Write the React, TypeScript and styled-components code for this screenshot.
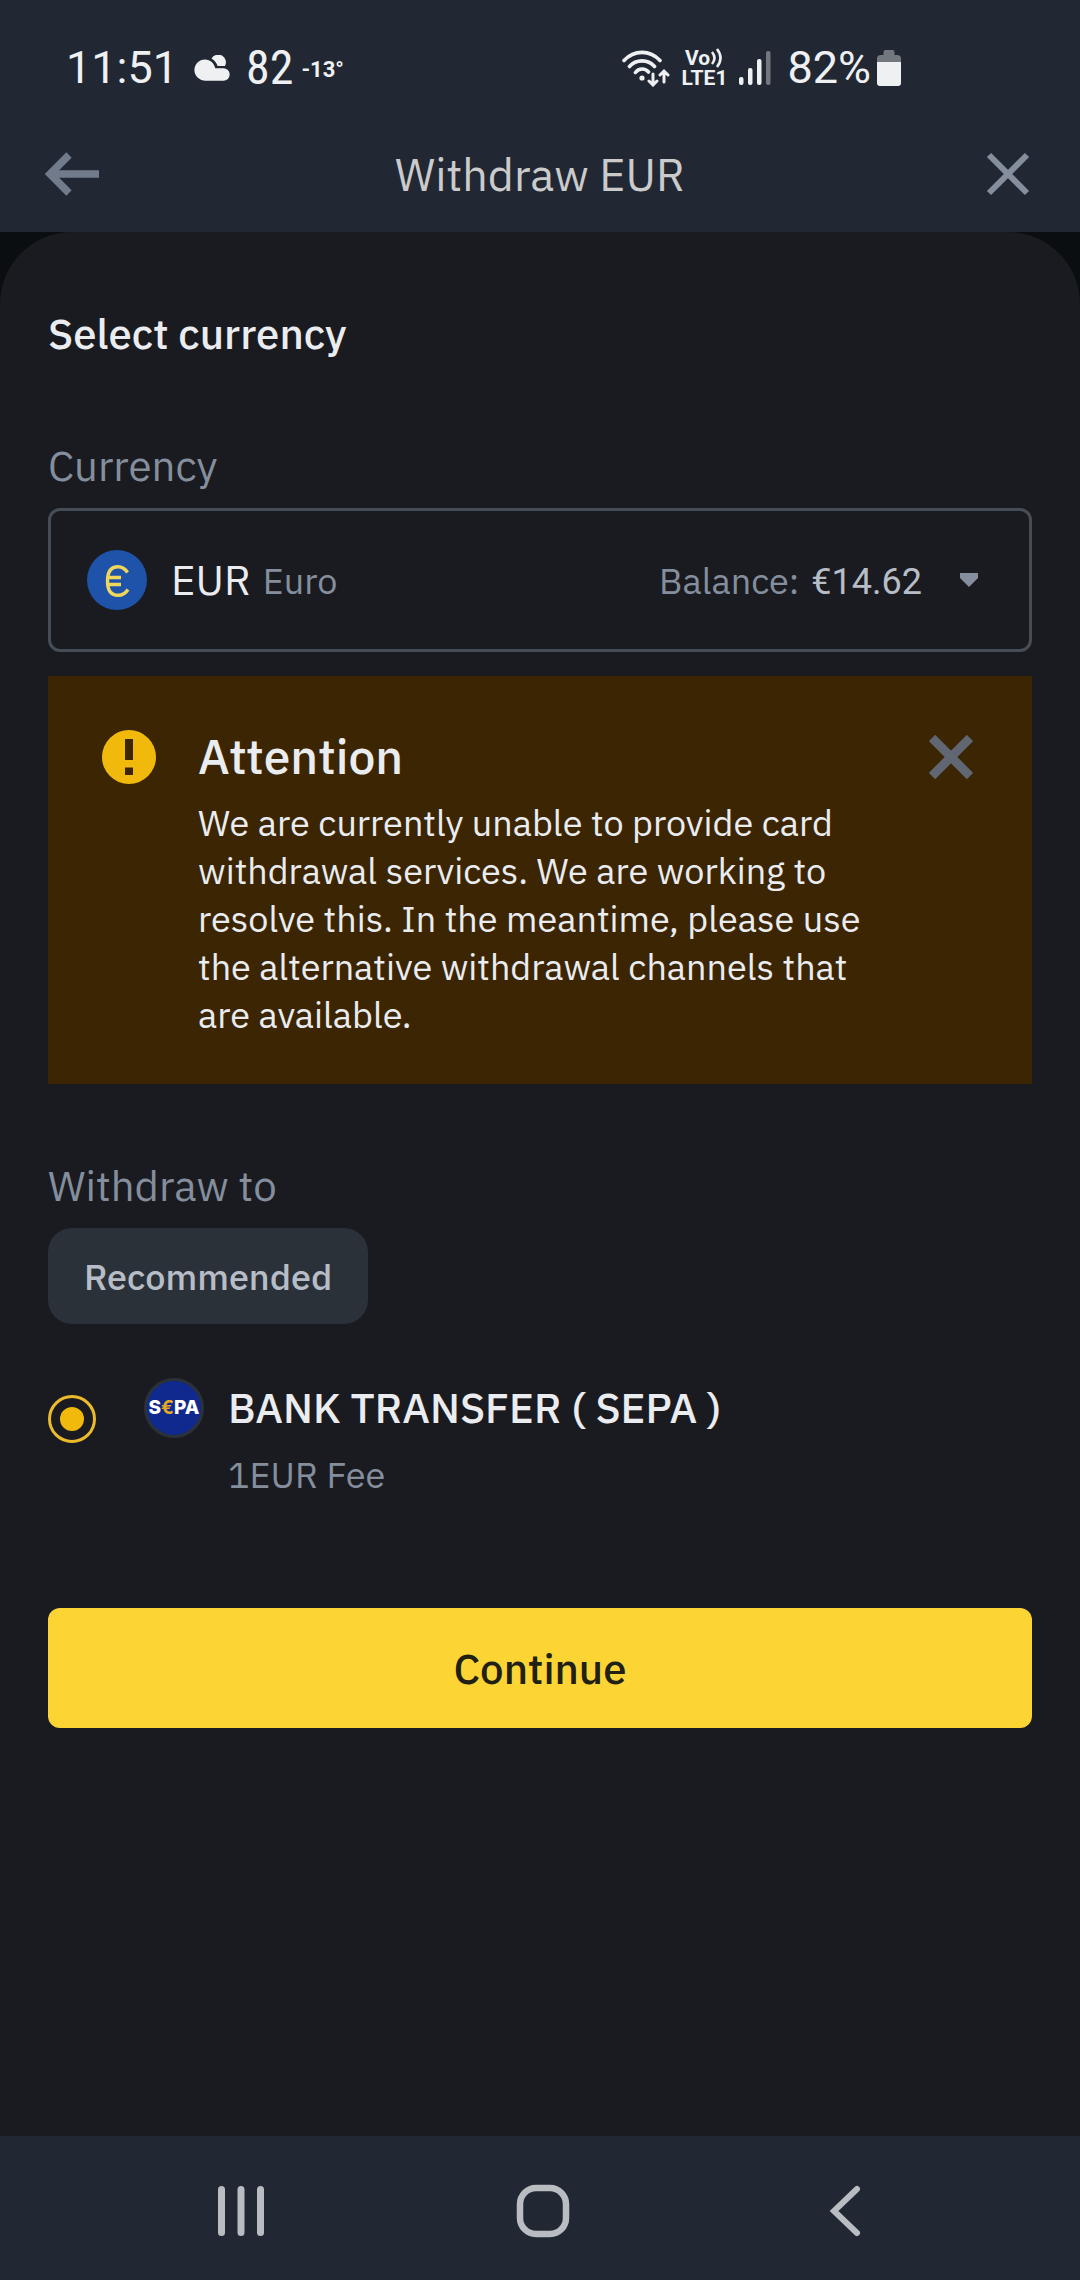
import React, { useState } from "react";
import styled, { createGlobalStyle } from "styled-components";

const color = {
  chrome: "#212833",
  backdrop: "#0b0e11",
  sheet: "#1a1b20",
  line: "#474d57",
  primary: "#eaecef",
  secondary: "#b7bdc6",
  tertiary: "#848e9c",
  status: "#eff0f2",
  nav: "#b9bcc1",
  yellow: "#fcd535",
  gold: "#f0b90b",
  chip: "#2b3139",
  warning: "#3b2503",
};

const GlobalStyle = createGlobalStyle`
  *, *::before, *::after { box-sizing: border-box; }
  body {
    margin: 0;
    background: ${color.backdrop};
    font-family: "IBM Plex Sans", Roboto, "Noto Sans", sans-serif;
  }
  h1, h2, h3, p { margin: 0; }
  button, select { font: inherit; }
`;

const Screen = styled.div`
  display: flex;
  flex-direction: column;
  min-height: 100vh;
  background: ${color.backdrop};
`;

const StatusBar = styled.div`
  display: flex;
  justify-content: space-between;
  align-items: center;
  height: 112px;
  padding: 24px 179px 0 66px;
  background: ${color.chrome};
  color: ${color.status};
  font-family: Roboto, sans-serif;
`;

const StatusGroup = styled.div<{ $gap: number }>`
  display: flex;
  align-items: center;
  gap: ${(p) => p.$gap}px;
`;

const StatusText = styled.span`
  font-size: 45px;
  line-height: 48px;
`;

const WeatherText = styled.span`
  display: flex;
  align-items: center;
  gap: 8px;
  font-family: "Roboto Condensed", Roboto, sans-serif;
  font-size: 48px;
  line-height: 48px;
  small {
    padding-top: 3px;
    font-family: Roboto, sans-serif;
    font-size: 22px;
    font-weight: 700;
  }
`;

const Carrier = styled.span`
  display: flex;
  flex-direction: column;
  font-size: 21px;
  font-weight: 700;
  line-height: 20px;
  span {
    display: flex;
    align-items: center;
    justify-content: center;
  }
`;

const Header = styled.header`
  display: grid;
  grid-template-columns: 60px 1fr 60px;
  align-items: center;
  height: 120px;
  padding: 4px 42px 0;
  background: ${color.chrome};
`;

const Title = styled.h1`
  color: #cbcbcb;
  font-size: 45px;
  font-weight: 400;
  line-height: 60px;
  text-align: center;
`;

const IconButton = styled.button`
  display: flex;
  align-items: center;
  justify-content: center;
  width: 60px;
  height: 60px;
  padding: 0;
  border: 0;
  background: none;
  color: ${color.tertiary};
  cursor: pointer;
`;

const Sheet = styled.main`
  flex: 1;
  padding: 72px 48px;
  border-radius: 72px 72px 0 0;
  background: ${color.sheet};
`;

const SectionTitle = styled.h2`
  color: ${color.primary};
  font-size: 42px;
  font-weight: 500;
  line-height: 60px;
`;

const FieldLabel = styled.label`
  display: block;
  margin: 72px 0 12px;
  color: ${color.tertiary};
  font-size: 42px;
  font-weight: 400;
  line-height: 60px;
`;

const CurrencyField = styled.div`
  display: flex;
  align-items: center;
  height: 144px;
  padding: 0 51px 0 36px;
  border: 3px solid ${color.line};
  border-radius: 12px;
  color: ${color.tertiary};
  font-size: 36px;
`;

const CurrencySelect = styled.select`
  margin: 0 12px 0 24px;
  padding: 0;
  border: 0;
  appearance: none;
  background: none;
  color: ${color.primary};
  font-size: 42px;
  line-height: 60px;
  field-sizing: content;
`;

const Balance = styled.span`
  display: flex;
  align-items: baseline;
  gap: 12px;
  margin: 0 38px 0 auto;
  strong {
    color: ${color.secondary};
    font-family: Roboto, sans-serif;
    font-weight: 400;
  }
`;

const Alert = styled.section`
  display: flex;
  gap: 42px;
  margin-top: 24px;
  padding: 48px 51px 45px 54px;
  background: ${color.warning};
  color: ${color.primary};
  & > svg { flex: none; margin-top: 6px; }
  & > button { margin-top: 3px; }
`;

const AlertBody = styled.div`
  flex: 1;
  h3 {
    margin-bottom: 11px;
    font-size: 48px;
    font-weight: 500;
    line-height: 64px;
  }
  p {
    font-size: 36px;
    line-height: 48px;
  }
`;

const Chip = styled.button`
  height: 96px;
  padding: 0 36px;
  border: 0;
  border-radius: 24px;
  background: ${color.chip};
  color: ${color.secondary};
  font-size: 36px;
  font-weight: 500;
`;

const Option = styled.label`
  display: flex;
  gap: 24px;
  margin-top: 54px;
  cursor: pointer;
`;

const Radio = styled.input`
  flex: none;
  width: 48px;
  height: 48px;
  margin: 17px 24px 0 0;
  padding: 9px;
  border: 3px solid #ecbb2c;
  border-radius: 50%;
  appearance: none;
  &:checked::before {
    content: "";
    display: block;
    height: 100%;
    border-radius: 50%;
    background: ${color.gold};
  }
`;

const SepaBadge = styled.span`
  display: flex;
  flex: none;
  align-items: center;
  justify-content: center;
  width: 60px;
  height: 60px;
  border: 3px solid ${color.chip};
  border-radius: 50%;
  background: #10298e;
  color: #fff;
  font: 800 19px/20px Inter, sans-serif;
  i {
    color: #e5a823;
    font-style: normal;
    font-weight: 700;
  }
`;

const OptionText = styled.span`
  display: flex;
  flex-direction: column;
  gap: 13px;
`;

const OptionName = styled.span`
  color: ${color.primary};
  font-size: 42px;
  font-weight: 500;
  line-height: 60px;
`;

const OptionFee = styled.span`
  color: ${color.tertiary};
  font-size: 36px;
  line-height: 48px;
`;

const Continue = styled.button`
  display: block;
  width: 100%;
  height: 120px;
  margin-top: 109px;
  border: 0;
  border-radius: 12px;
  background: ${color.yellow};
  color: #202013;
  font-size: 42px;
  font-weight: 500;
  cursor: pointer;
`;

const NavBar = styled.nav`
  display: grid;
  grid-template-columns: repeat(3, 1fr);
  align-items: center;
  justify-items: center;
  height: 144px;
  padding: 6px 84px 0 90px;
  background: ${color.chrome};
  button { color: ${color.nav}; }
`;

const CloudIcon = () => (
  <svg width="36" height="26" viewBox="0 0 36 26" fill="currentColor" aria-hidden="true">
    <path d="M17.500 3.600A7.400 7.400 0 0 1 31 11H23.600C22.500 8 20.500 5.200 17.500 3.600Z" />
    <path d="M11 4.500C16.500 4.500 20 8 21.300 13.300H29.500A6.200 6.200 0 0 1 29.500 25.700H11A10.600 10.600 0 0 1 11 4.500Z" />
  </svg>
);

const WifiIcon = () => (
  <svg width="48" height="37" viewBox="0 0 48 37" fill="none" stroke="currentColor" strokeWidth="3.600" strokeLinecap="round" aria-hidden="true">
    <path d="M2 10.500C12-.400 28-.400 38 10.500M7.500 16.500C14 9 26 9 32.500 16.500M13.500 22.500C17 18 23 18 26.500 22" />
    <circle cx="20" cy="28" r="2.600" fill="currentColor" stroke="none" />
    <path d="M31 24V34.500M27 31L31 35L35 31M42 32V21.500M38 25L42 21L46 25" strokeWidth="3" />
  </svg>
);

const VoiceIcon = () => (
  <svg width="14" height="20" viewBox="0 0 14 20" fill="none" stroke="currentColor" strokeWidth="2.600" aria-hidden="true">
    <path d="M2 4Q7 10 2 16M7 1Q14 10 7 19" />
  </svg>
);

const SignalIcon = () => (
  <svg width="32" height="36" viewBox="0 0 32 36" fill="currentColor" aria-hidden="true">
    <rect x="0" y="27" width="4.500" height="8" rx="2" />
    <rect x="9" y="18" width="4.500" height="17" rx="2" />
    <rect x="18" y="9" width="4.500" height="26" rx="2" />
    <rect x="27" y="1" width="4.500" height="34" rx="2" opacity=".4" />
  </svg>
);

const BatteryIcon = () => (
  <svg width="24" height="36" viewBox="0 0 24 36" fill="currentColor" aria-hidden="true">
    <path d="M0 12V8.500Q0 5 4 5H6.500V2Q6.500 0 8.500 0H15.500Q17.500 0 17.500 2V5H20Q24 5 24 8.500V12Z" opacity=".4" />
    <path d="M0 12H24V33Q24 36 21 36H3Q0 36 0 33Z" />
  </svg>
);

const BackIcon = () => (
  <svg width="54" height="44" viewBox="0 0 54 44" fill="none" stroke="#727b8c" strokeWidth="7.500" aria-hidden="true">
    <path d="M24 3L5 22L24 41M6 22H54" />
  </svg>
);

const CrossIcon = ({ weight, tint }: { weight: number; tint: string }) => (
  <svg width="44" height="44" viewBox="0 0 44 44" fill="none" stroke={tint} strokeWidth={weight} aria-hidden="true">
    <path d="M3 3L41 41M41 3L3 41" />
  </svg>
);

const EuroIcon = () => (
  <svg width="60" height="60" viewBox="0 0 60 60" fill="none" aria-hidden="true">
    <circle cx="30" cy="30" r="30" fill="#1e53a9" />
    <path d="M40.500 22.500C38 18.500 35 16.700 31 16.700C24 16.700 20.500 22 20.500 31C20.500 40 24 45.300 31 45.300C35.500 45.300 38.500 43.500 41 39.500M20.500 27.500H34M20.500 34.500H34" stroke="#f1d65c" strokeWidth="3.400" />
  </svg>
);

const CaretIcon = () => (
  <svg width="18" height="14" viewBox="0 0 18 14" fill={color.tertiary} aria-hidden="true">
    <path d="M0 0H18V5L9 14L0 5Z" />
  </svg>
);

const WarningIcon = () => (
  <svg width="54" height="54" viewBox="0 0 54 54" aria-hidden="true">
    <circle cx="27" cy="27" r="27" fill={color.gold} />
    <path d="M23 9H31V30H23ZM23 37.500H31V45H23Z" fill={color.warning} />
  </svg>
);

const RecentsIcon = () => (
  <svg width="48" height="52" viewBox="0 0 48 52" stroke="currentColor" strokeWidth="7" strokeLinecap="round" aria-hidden="true">
    <path d="M4.500 4.500V47.500M24 4.500V47.500M43.500 4.500V47.500" />
  </svg>
);

const HomeIcon = () => (
  <svg width="54" height="54" viewBox="0 0 54 54" fill="none" stroke="currentColor" strokeWidth="6.500" aria-hidden="true">
    <rect x="4" y="4" width="46" height="46" rx="16" />
  </svg>
);

const NavBackIcon = () => (
  <svg width="32" height="52" viewBox="0 0 32 52" fill="none" stroke="currentColor" strokeWidth="6" strokeLinecap="round" aria-hidden="true">
    <path d="M28 4L5 26L28 48" />
  </svg>
);

export default function App() {
  const [alertOpen, setAlertOpen] = useState(true);

  return (
    <Screen>
      <GlobalStyle />
      <StatusBar>
        <StatusGroup $gap={16}>
          <StatusText>11:51</StatusText>
          <CloudIcon />
          <WeatherText>
            82<small>-13°</small>
          </WeatherText>
        </StatusGroup>
        <StatusGroup $gap={16}>
          <StatusGroup $gap={12}>
            <WifiIcon />
            <Carrier>
              <span>
                Vo
                <VoiceIcon />
              </span>
              LTE1
            </Carrier>
            <SignalIcon />
          </StatusGroup>
          <StatusGroup $gap={6}>
            <StatusText>82%</StatusText>
            <BatteryIcon />
          </StatusGroup>
        </StatusGroup>
      </StatusBar>

      <Header>
        <IconButton type="button" aria-label="Back">
          <BackIcon />
        </IconButton>
        <Title>Withdraw EUR</Title>
        <IconButton type="button" aria-label="Close">
          <CrossIcon weight={6} tint={color.tertiary} />
        </IconButton>
      </Header>

      <Sheet>
        <SectionTitle>Select currency</SectionTitle>
        <FieldLabel htmlFor="currency">Currency</FieldLabel>
        <CurrencyField>
          <EuroIcon />
          <CurrencySelect id="currency" defaultValue="EUR">
            <option value="EUR">EUR</option>
          </CurrencySelect>
          <span>Euro</span>
          <Balance>
            Balance: <strong>€14.62</strong>
          </Balance>
          <CaretIcon />
        </CurrencyField>

        {alertOpen && (
          <Alert>
            <WarningIcon />
            <AlertBody>
              <h3>Attention</h3>
              <p>
                We are currently unable to provide card withdrawal services. We are working to
                resolve this. In the meantime, please use the alternative withdrawal channels that
                are available.
              </p>
            </AlertBody>
            <IconButton type="button" aria-label="Dismiss" onClick={() => setAlertOpen(false)}>
              <CrossIcon weight={9} tint="#606772" />
            </IconButton>
          </Alert>
        )}

        <FieldLabel as="h2">Withdraw to</FieldLabel>
        <Chip type="button">Recommended</Chip>

        <Option htmlFor="sepa">
          <Radio type="radio" id="sepa" name="channel" defaultChecked />
          <SepaBadge>
            S<i>€</i>PA
          </SepaBadge>
          <OptionText>
            <OptionName>BANK TRANSFER ( SEPA )</OptionName>
            <OptionFee>1EUR Fee</OptionFee>
          </OptionText>
        </Option>

        <Continue type="button">Continue</Continue>
      </Sheet>

      <NavBar>
        <IconButton type="button" aria-label="Recents">
          <RecentsIcon />
        </IconButton>
        <IconButton type="button" aria-label="Home">
          <HomeIcon />
        </IconButton>
        <IconButton type="button" aria-label="Back">
          <NavBackIcon />
        </IconButton>
      </NavBar>
    </Screen>
  );
}
